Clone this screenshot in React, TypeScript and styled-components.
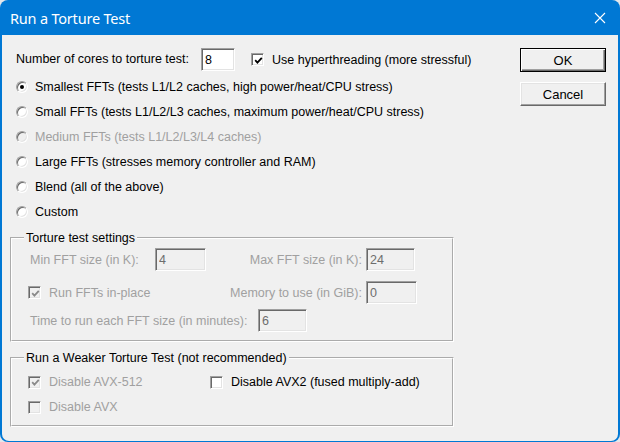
import { FC, ReactElement, ReactNode } from 'react';
import styled, { createGlobalStyle } from 'styled-components';

const GlobalStyle = createGlobalStyle`
    html, body {
        margin: 0;
        padding: 0;
        background: #e4e7eb;
    }
    body {
        width: 620px;
        height: 442px;
        overflow: hidden;
        font-family: "Liberation Sans", Arial, sans-serif;
    }
`;

const CheckMark: FC<{ color: string }> = ({ color }): ReactElement => (
    <svg width="9" height="9" viewBox="0 0 9 9">
        <path d="M1.2 4.2 L3.4 6.6 L7.8 1.8" fill="none" stroke={color} strokeWidth="1.8" />
    </svg>
);

const CheckItem: FC<{ checked?: boolean; disabled?: boolean; children: ReactNode }> = ({
    checked,
    disabled,
    children
}): ReactElement => (
    <Option $disabled={disabled}>
        <Box $disabled={disabled}>{checked && <CheckMark color={disabled ? '#8a8a8a' : '#000'} />}</Box>
        <OptionText>{children}</OptionText>
    </Option>
);

const RadioItem: FC<{ checked?: boolean; disabled?: boolean; children: ReactNode }> = ({
    checked,
    disabled,
    children
}): ReactElement => (
    <RadioRow $disabled={disabled}>
        <Circle $checked={checked} $disabled={disabled} />
        <RadioText>{children}</RadioText>
    </RadioRow>
);

const App: FC<any> = (): ReactElement => {
    const radios = [
        { label: 'Smallest FFTs (tests L1/L2 caches, high power/heat/CPU stress)', checked: true },
        { label: 'Small FFTs (tests L1/L2/L3 caches, maximum power/heat/CPU stress)' },
        { label: 'Medium FFTs (tests L1/L2/L3/L4 caches)', disabled: true },
        { label: 'Large FFTs (stresses memory controller and RAM)' },
        { label: 'Blend (all of the above)' },
        { label: 'Custom' }
    ];
    return (
        <Window>
            <GlobalStyle />
            <TitleBar>
                <Title>Run a Torture Test</Title>
                <Close>
                    <svg width="12" height="12" viewBox="0 0 12 12">
                        <path d="M1 1 L11 11 M11 1 L1 11" stroke="#fff" strokeWidth="1.1" />
                    </svg>
                </Close>
            </TitleBar>
            <Body>
                <Main>
                    <CoresRow>
                        <CoresLabel>Number of cores to torture test:</CoresLabel>
                        <TextBox $width={34} defaultValue="8" />
                        <HyperBox>
                            <CheckItem checked>Use hyperthreading (more stressful)</CheckItem>
                        </HyperBox>
                    </CoresRow>
                    {radios.map((r) => (
                        <RadioItem key={r.label} checked={r.checked} disabled={r.disabled}>
                            {r.label}
                        </RadioItem>
                    ))}
                    <Group $top={6}>
                        <Legend>Torture test settings</Legend>
                        <SizeGrid>
                            <FieldLabel>Min FFT size (in K):</FieldLabel>
                            <TextBox $width={51} $disabled defaultValue="4" readOnly />
                            <RightLabel>Max FFT size (in K):</RightLabel>
                            <TextBox $width={49} $disabled defaultValue="24" readOnly />
                            <CheckCell>
                                <CheckItem checked disabled>
                                    Run FFTs in-place
                                </CheckItem>
                            </CheckCell>
                            <RightLabel>Memory to use (in GiB):</RightLabel>
                            <TextBox $width={51} $disabled defaultValue="0" readOnly />
                        </SizeGrid>
                        <TimeRow>
                            <FieldLabel $width={230}>Time to run each FFT size (in minutes):</FieldLabel>
                            <TextBox $width={49} $disabled defaultValue="6" readOnly />
                        </TimeRow>
                    </Group>
                    <Group $top={8} $bottom={8}>
                        <Legend>Run a Weaker Torture Test (not recommended)</Legend>
                        <WeakRow $top={6}>
                            <WeakCell>
                                <CheckItem checked disabled>
                                    Disable AVX-512
                                </CheckItem>
                            </WeakCell>
                            <CheckItem>Disable AVX2 (fused multiply-add)</CheckItem>
                        </WeakRow>
                        <WeakRow $top={5}>
                            <CheckItem disabled>Disable AVX</CheckItem>
                        </WeakRow>
                    </Group>
                </Main>
                <Buttons>
                    <Button $primary>OK</Button>
                    <Button>Cancel</Button>
                </Buttons>
            </Body>
        </Window>
    );
};

const Window = styled.div`
    width: 620px;
    height: 442px;
    box-sizing: border-box;
    background: #0078d4;
    border-radius: 8px;
    overflow: hidden;
    display: flex;
    flex-direction: column;
    padding: 0 2px 1px 2px;
`;
const TitleBar = styled.div`
    height: 35px;
    flex: none;
    display: flex;
    align-items: center;
    padding-left: 8px;
`;
const Title = styled.div`
    color: #ffffff;
    font-family: "Noto Sans", "Open Sans", sans-serif;
    font-size: 14.5px;
    letter-spacing: -0.2px;
`;
const Close = styled.div`
    margin-left: auto;
    width: 36px;
    height: 35px;
    display: flex;
    align-items: center;
    justify-content: center;
`;
const Body = styled.div`
    flex: 1;
    background: #f0f0f0;
    border-radius: 0 0 7px 7px;
    display: flex;
    padding: 13px 12px 0 8px;
    font-size: 12.5px;
    color: #000;
`;
const Main = styled.div`
    width: 444px;
    flex: none;
    display: flex;
    flex-direction: column;
`;
const CoresRow = styled.div`
    height: 26px;
    display: flex;
    align-items: flex-start;
    padding-left: 6px;
    white-space: nowrap;
`;
const CoresLabel = styled.div`
    width: 185px;
    line-height: 23px;
    flex: none;
`;
const HyperBox = styled.div`
    margin-left: 16px;
    height: 23px;
    display: flex;
    align-items: center;
`;
const TextBox = styled.input<{ $width: number; $disabled?: boolean }>`
    width: ${(p) => p.$width}px;
    height: 23px;
    box-sizing: border-box;
    flex: none;
    margin: 0;
    padding: 0 3px;
    font: inherit;
    color: ${(p) => (p.$disabled ? '#6d6d6d' : '#000')};
    background: ${(p) => (p.$disabled ? '#f0f0f0' : '#ffffff')};
    border: 1px solid;
    border-color: #a0a0a0 #ffffff #ffffff #a0a0a0;
    box-shadow: inset 1px 1px 0 #696969, inset -1px -1px 0 #e3e3e3;
    outline: none;
`;
const Option = styled.div<{ $disabled?: boolean }>`
    display: flex;
    align-items: center;
    white-space: nowrap;
    color: ${(p) => (p.$disabled ? '#a0a0a0' : '#000')};
`;
const Box = styled.div<{ $disabled?: boolean }>`
    width: 13px;
    height: 13px;
    box-sizing: border-box;
    flex: none;
    border: 1px solid;
    border-color: #a0a0a0 #ffffff #ffffff #a0a0a0;
    box-shadow: inset 1px 1px 0 #696969, inset -1px -1px 0 #e3e3e3;
    background: ${(p) => (p.$disabled ? '#f0f0f0' : '#ffffff')};
    display: flex;
    align-items: center;
    justify-content: center;
    padding: 1px 0 0 1px;
`;
const OptionText = styled.span`
    margin-left: 8px;
`;
const RadioRow = styled.div<{ $disabled?: boolean }>`
    height: 25px;
    display: flex;
    align-items: center;
    padding-left: 6px;
    white-space: nowrap;
    color: ${(p) => (p.$disabled ? '#a0a0a0' : '#000')};
`;
const Circle = styled.div<{ $checked?: boolean; $disabled?: boolean }>`
    position: relative;
    width: 12px;
    height: 12px;
    box-sizing: border-box;
    flex: none;
    border-radius: 50%;
    border: 1px solid;
    border-color: #a0a0a0 #ffffff #ffffff #a0a0a0;
    box-shadow: inset 1px 1px 0 #696969, inset -1px -1px 0 #e3e3e3;
    background: ${(p) => (p.$disabled ? '#f0f0f0' : '#ffffff')};
    &::after {
        content: '';
        display: ${(p) => (p.$checked ? 'block' : 'none')};
        position: absolute;
        left: 3px;
        top: 3px;
        width: 4px;
        height: 4px;
        border-radius: 50%;
        background: #000;
    }
`;
const RadioText = styled.span`
    margin-left: 7px;
`;
const Group = styled.fieldset<{ $top: number; $bottom?: number }>`
    margin: ${(p) => p.$top}px 0 0 0;
    padding: 0 0 ${(p) => p.$bottom ?? 8}px 16px;
    border: 2px groove #ffffff;
    min-width: 0;
`;
const Legend = styled.legend`
    margin-left: -4px;
    padding: 0 2px;
    line-height: 16px;
    color: #000;
`;
const SizeGrid = styled.div`
    margin-top: 2px;
    display: grid;
    grid-template-columns: 127px 51px 160px auto;
    grid-auto-rows: 23px;
    row-gap: 10px;
    align-items: center;
    white-space: nowrap;
`;
const FieldLabel = styled.div<{ $width?: number }>`
    width: ${(p) => (p.$width ? `${p.$width}px` : 'auto')};
    flex: none;
    padding-left: 2px;
    box-sizing: border-box;
    color: #a0a0a0;
    white-space: nowrap;
`;
const RightLabel = styled.div`
    text-align: right;
    padding-right: 4px;
    color: #a0a0a0;
`;
const CheckCell = styled.div`
    grid-column: span 2;
`;
const TimeRow = styled.div`
    margin-top: 5px;
    height: 23px;
    display: flex;
    align-items: center;
`;
const WeakRow = styled.div<{ $top: number }>`
    margin-top: ${(p) => p.$top}px;
    height: 20px;
    display: flex;
    align-items: center;
`;
const WeakCell = styled.div`
    width: 182px;
    flex: none;
`;
const Buttons = styled.div`
    margin-left: auto;
    width: 86px;
    display: flex;
    flex-direction: column;
    gap: 10px;
`;
const Button = styled.button<{ $primary?: boolean }>`
    width: 86px;
    height: 24px;
    box-sizing: border-box;
    margin: 0;
    padding: 0;
    font: inherit;
    font-size: 13px;
    color: #000;
    background: #f0f0f0;
    border: 1px solid;
    border-color: ${(p) => (p.$primary ? '#000 #000 #000 #000' : '#ffffff #696969 #696969 #ffffff')};
    box-shadow: ${(p) =>
        p.$primary
            ? 'inset 1px 1px 0 #ffffff, inset -1px -1px 0 #696969, inset -2px -2px 0 #a0a0a0'
            : 'inset -1px -1px 0 #a0a0a0, inset 1px 1px 0 #e3e3e3'};
    cursor: pointer;
`;

export default App;
